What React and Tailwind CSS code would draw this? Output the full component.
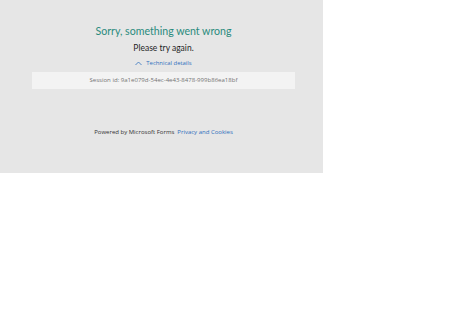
import React from 'react';

const App = () => {
  return (
    <div className="w-[474px] h-[316px] bg-white" style={{ fontFamily: '"Open Sans", "Noto Sans", sans-serif' }}>
      {/* PANEL */}
      <div className="w-[323px] h-[173px] bg-[#e6e6e6] pl-[32px] pt-[23px]">
        <div className="w-[263px] flex flex-col items-center">
          <h1 className="font-['Lato'] text-[10.6px] leading-[16px] text-[#2a8b7d]">Sorry, something went wrong</h1>
          <p className="mt-[1px] font-['Lato'] text-[8.5px] leading-[16px] text-[#1f1f1f]">Please try again.</p>
          <div className="mt-[1px] flex items-center gap-[4px] text-[5.9px] leading-[12px] text-[#2f6fbd]">
            <svg width="7" height="5" viewBox="0 0 7 5" fill="none">
              <path d="M0.5 4 L3.5 1 L6.5 4" stroke="#2f6fbd" strokeWidth="0.8" />
            </svg>
            <span>Technical details</span>
          </div>
          <div className="mt-[3px] w-full h-[17px] bg-[#f3f3f3] flex items-center justify-center text-[6.05px] text-[#747474]">
            Session id: 9a1e079d-54ec-4e43-8478-999b86ea18bf
          </div>
          <div className="mt-[37px] flex gap-[3px] text-[6px] leading-[12px]">
            <span className="text-[#333333]">Powered by Microsoft Forms</span>
            <span className="text-[#2f6fbd]">Privacy and Cookies</span>
          </div>
        </div>
      </div>
    </div>
  );
};

export default App;
